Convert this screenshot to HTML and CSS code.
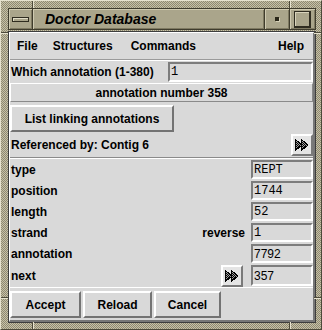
FILE: index.html
```html
<!DOCTYPE html>
<html>
<head>
<meta charset="utf-8">
<link rel="stylesheet" href="styles.css">
</head>
<body>
<div class="frame">
  <div class="notch nv nt1"></div>
  <div class="notch nv nt2"></div>
  <div class="notch nv nb1"></div>
  <div class="notch nv nb2"></div>
  <div class="notch nh nl1"></div>
  <div class="notch nh nl2"></div>
  <div class="notch nh nr1"></div>
  <div class="notch nh nr2"></div>

  <div class="titlebar">
    <div class="tb-sec tb-menu"><span class="tb-bar"></span></div>
    <div class="tb-sec tb-title">Doctor Database</div>
    <div class="tb-sec tb-min"><span class="tb-dot"></span></div>
    <div class="tb-sec tb-max"><span class="tb-sq"></span></div>
  </div>

  <div class="content">
    <div class="panel">
      <div class="menubar">
        <span class="mi mi-file">File</span>
        <span class="mi mi-struct">Structures</span>
        <span class="mi mi-cmd">Commands</span>
        <span class="mi mi-help">Help</span>
      </div>

      <div class="which">
        <span class="lbl">Which annotation (1-380)</span>
        <div class="entry entry-wide mono">1</div>
      </div>

      <div class="banner">annotation number 358</div>

      <div class="listrow">
        <button class="btn btn-list">List linking annotations</button>
      </div>

      <div class="refrow">
        <span class="lbl">Referenced by: Contig 6</span>
        <button class="arrow arrow-ref">
          <svg width="14" height="12" viewBox="0 0 14 12">
            <defs>
              <pattern id="dith" width="2" height="2" patternUnits="userSpaceOnUse">
                <rect width="2" height="2" fill="#a0a0a0"/>
                <rect x="0" y="0" width="1" height="1" fill="#000"/>
                <rect x="1" y="1" width="1" height="1" fill="#000"/>
              </pattern>
            </defs>
            <polygon points="0.5,0.5 7,6 0.5,11.5" fill="url(#dith)" stroke="#000" stroke-width="1"/>
            <polygon points="6.5,0.5 13,6 6.5,11.5" fill="url(#dith)" stroke="#000" stroke-width="1"/>
          </svg>
        </button>
      </div>

      <div class="sep"></div>

      <div class="fields">
        <div class="frow">
          <span class="lbl">type</span>
          <div class="entry entry-sm mono">REPT</div>
        </div>
        <div class="frow">
          <span class="lbl">position</span>
          <div class="entry entry-sm mono">1744</div>
        </div>
        <div class="frow">
          <span class="lbl">length</span>
          <div class="entry entry-sm mono">52</div>
        </div>
        <div class="frow">
          <span class="lbl">strand</span>
          <span class="lbl lbl-rev">reverse</span>
          <div class="entry entry-sm mono entry-after">1</div>
        </div>
        <div class="frow">
          <span class="lbl">annotation</span>
          <div class="entry entry-sm sans">7792</div>
        </div>
        <div class="frow frow-last">
          <span class="lbl">next</span>
          <button class="arrow arrow-next">
            <svg width="14" height="12" viewBox="0 0 14 12">
              <polygon points="0.5,0.5 7,6 0.5,11.5" fill="url(#dith)" stroke="#000" stroke-width="1"/>
              <polygon points="6.5,0.5 13,6 6.5,11.5" fill="url(#dith)" stroke="#000" stroke-width="1"/>
            </svg>
          </button>
          <div class="entry entry-sm sans entry-after">357</div>
        </div>
      </div>

      <div class="actions">
        <button class="btn btn-accept">Accept</button>
        <button class="btn btn-reload">Reload</button>
        <button class="btn btn-cancel">Cancel</button>
      </div>
    </div>
  </div>
</div>
</body>
</html>
```

FILE: styles.css
```css
* {
  box-sizing: border-box;
}

html, body {
  margin: 0;
  padding: 0;
}

body {
  width: 322px;
  height: 330px;
  overflow: hidden;
  font-family: "Liberation Sans", Arial, sans-serif;
  font-size: 12px;
  color: #000;
  background: #a9a48b;
}

.frame {
  position: relative;
  width: 322px;
  height: 330px;
  border: 1px solid;
  border-color: #e6e2ce #4d4a3a #4d4a3a #e6e2ce;
  padding: 7px 5px 6px 7px;
  background: repeating-conic-gradient(#c6c1a7 0 25%, #8f8971 0 50%) 0 0 / 2px 2px;
  display: flex;
  flex-direction: column;
}

/* resize-handle notches of the window frame */
.notch {
  position: absolute;
  background: #e6e2ce;
}
.nv {
  width: 2px;
  height: 7px;
  border-left: 1px solid #4d4a3a;
}
.nh {
  width: 7px;
  height: 2px;
  border-top: 1px solid #4d4a3a;
}
.nt1 { top: 0; left: 31px; }
.nt2 { top: 0; left: 288px; }
.nb1 { bottom: 0; left: 31px; }
.nb2 { bottom: 0; left: 288px; }
.nl1 { left: 0; top: 31px; }
.nl2 { left: 0; top: 296px; }
.nr1 { right: 0; top: 31px; }
.nr2 { right: 0; top: 296px; }

/* title bar */
.titlebar {
  height: 22px;
  margin-bottom: 1px;
  display: flex;
  background: #aaa58b;
  border: 1px solid #3f3c2d;
  flex: none;
}

.tb-sec {
  display: flex;
  align-items: center;
  justify-content: center;
  box-shadow: inset 1px 1px 0 #cfcab1, inset -1px -1px 0 #7e7961;
}

.tb-menu {
  width: 24px;
  border-right: 1px solid #3f3c2d;
}

.tb-bar {
  width: 17px;
  height: 5px;
  border: 1px solid #2f2c20;
  background: #aaa58b;
  box-shadow: inset 1px 1px 0 #e0dcc6;
}

.tb-title {
  flex: 1;
  justify-content: flex-start;
  padding-left: 12px;
  font-weight: bold;
  font-style: italic;
  font-size: 14px;
  padding-bottom: 1px;
}

.tb-min {
  width: 25px;
  border-left: 1px solid #3f3c2d;
}

.tb-dot {
  width: 4px;
  height: 4px;
  background: #2a2719;
  box-shadow: 1px 1px 0 #d5d0b7;
}

.tb-max {
  width: 26px;
  border-left: 1px solid #3f3c2d;
}

.tb-sq {
  width: 17px;
  height: 17px;
  border: 1px solid #2f2c20;
  border-right-width: 2px;
  border-bottom-width: 2px;
  background: #aaa58b;
  box-shadow: inset 1px 1px 0 #d8d3bb;
}

/* main content */
.content {
  flex: 1;
  border: 1px solid #3d3d3d;
  display: flex;
}

.panel {
  flex: 1;
  background: #d9d9d9;
  border-top: 1px solid #ffffff;
  border-left: 1px solid #ffffff;
  border-right: 2px solid #777777;
  border-bottom: 2px solid #777777;
  display: flex;
  flex-direction: column;
}

.lbl {
  font-weight: bold;
  white-space: nowrap;
}

.menubar {
  height: 27px;
  flex: none;
  display: flex;
  align-items: center;
  border-bottom: 1px solid #9a9a9a;
  font-weight: bold;
}
.mi-file { margin-left: 7px; }
.mi-struct { margin-left: 15px; }
.mi-cmd { margin-left: 18px; }
.mi-help { margin-left: auto; margin-right: 9px; }

.which {
  height: 23px;
  flex: none;
  display: flex;
  align-items: center;
  border-top: 1px solid #ffffff;
  padding-left: 1px;
}

.entry {
  background: #d9d9d9;
  border-top: 2px solid #7d7d7d;
  border-left: 2px solid #7d7d7d;
  border-right: 2px solid #ffffff;
  border-bottom: 2px solid #ffffff;
  display: flex;
  align-items: center;
  padding-left: 1px;
  white-space: nowrap;
  overflow: hidden;
}
.mono {
  font-family: "Liberation Mono", "Courier New", monospace;
  font-size: 12px;
}
.sans {
  font-family: "Liberation Sans", Arial, sans-serif;
  font-size: 12px;
}

.entry-wide {
  margin-left: auto;
  width: 145px;
  height: 20px;
}

.entry-sm {
  margin-left: auto;
  width: 62px;
  height: 19px;
}
.entry-after {
  margin-left: 0;
}

.banner {
  height: 19px;
  flex: none;
  display: flex;
  align-items: center;
  justify-content: center;
  font-weight: bold;
  border-top: 1px solid #ffffff;
  border-left: 1px solid #ffffff;
  border-bottom: 1px solid #8a8a8a;
  border-right: 1px solid #8a8a8a;
}

.btn {
  font-family: "Liberation Sans", Arial, sans-serif;
  font-size: 12px;
  font-weight: bold;
  color: #000;
  background: #d9d9d9;
  border-top: 2px solid #ffffff;
  border-left: 2px solid #ffffff;
  border-right: 2px solid #737373;
  border-bottom: 2px solid #737373;
  padding: 0;
  margin: 0;
  height: 27px;
  display: flex;
  align-items: center;
  justify-content: center;
}

.listrow {
  height: 31px;
  flex: none;
  padding-top: 3px;
  display: flex;
  align-items: flex-start;
}
.btn-list {
  width: 164px;
  height: 27px;
}

.refrow {
  height: 24px;
  flex: none;
  display: flex;
  align-items: center;
  padding-left: 1px;
}

.arrow {
  width: 22px;
  height: 22px;
  padding: 0;
  margin: 0;
  background: #e4e4e4;
  border-top: 2px solid #ffffff;
  border-left: 2px solid #ffffff;
  border-right: 2px solid #7a7a7a;
  border-bottom: 2px solid #7a7a7a;
  display: flex;
  align-items: center;
  justify-content: center;
}
.arrow svg {
  display: block;
  shape-rendering: crispEdges;
}
.arrow-ref {
  margin-left: auto;
}
.arrow-next {
  margin-left: auto;
  margin-right: 8px;
}

.sep {
  height: 2px;
  flex: none;
  border-top: 1px solid #8a8a8a;
  border-bottom: 1px solid #ffffff;
}

.fields {
  display: flex;
  flex-direction: column;
  flex: none;
}

.frow {
  height: 21px;
  display: flex;
  align-items: center;
  padding-left: 1px;
}
.frow-last {
  height: 23px;
}
.frow-last .entry {
  height: 21px;
}

.lbl-rev {
  margin-left: auto;
  margin-right: 6px;
}

.actions {
  flex: 1;
  display: flex;
  gap: 2px;
  align-items: flex-start;
  padding-top: 3px;
  border-top: 1px solid #ffffff;
}
.btn-accept { width: 71px; }
.btn-reload { width: 69px; }
.btn-cancel { width: 67px; }
```
